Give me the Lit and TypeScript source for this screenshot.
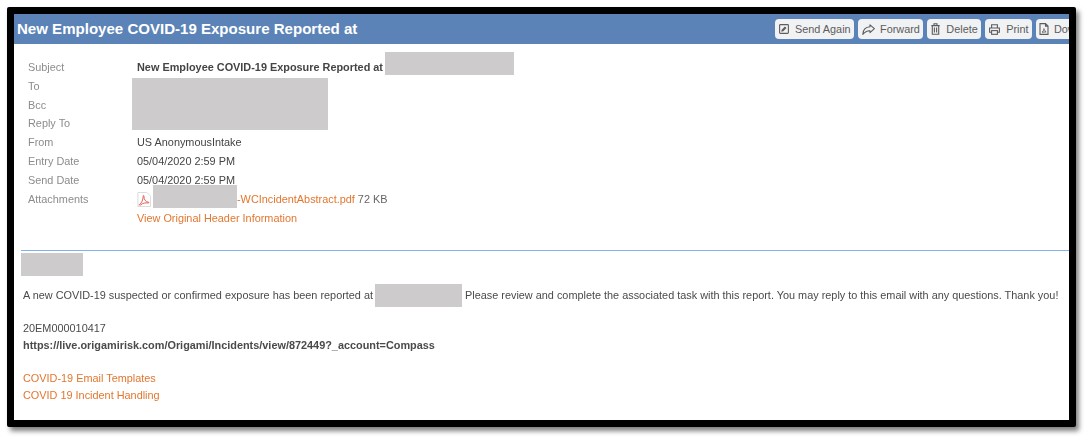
import { LitElement, html, css, svg } from "lit";
import { customElement } from "lit/decorators.js";

const ic = (w: number, h: number, body: unknown) =>
  html`<svg class="ic" style="width:${w}px;height:${h}px" viewBox="0 0 ${w} ${h}" fill="none" stroke="currentColor" stroke-width="1.1">${body}</svg>`;
const edit = ic(10, 10, svg`<rect x=".6" y=".6" width="8.800" height="8.800" rx=".8"/><path d="M2.200 7.800l.5-2.100 3.200-3.200 1.600 1.600-3.200 3.200z" fill="currentColor" stroke="none"/>`);
const fwd = ic(13, 11, svg`<path d="M8 .8l4.400 3.900L8 8.600V6.700C5.200 6.500 3 7.700.8 10.400 1 6 3.800 3.100 8 2.800z" stroke-linejoin="round"/>`);
const del = ic(9, 12, svg`<path d="M.3 2.600h8.400M3 2.400V.8h3v1.600M1.300 2.600v8.700h6.400V2.600M3.400 4.600v4.800M5.600 4.600v4.800"/>`);
const print = ic(11, 11, svg`<path d="M2.600 4V.7h5.800V4M2.600 8.300H.6V4h9.800v4.300h-2"/><rect x="2.600" y="6.600" width="5.800" height="3.700"/>`);
const doc = ic(10, 12, svg`<path d="M1 .6h5.500L9 3.100v8.300H1zM6.500.6v2.500H9"/><path d="M3 9.200c1.200-.8 1.900-2.200 1.900-3.600.5 1.500 1.200 2.700 2.200 3.300z" stroke-width=".9"/>`);

@customElement("app-root")
export class AppRoot extends LitElement {
  static styles = css`
    :host { display: block; width: 1089px; height: 441px; background: #fff; font-family: "Liberation Sans", Arial, sans-serif; font-size: 10.880px; color: #4a4a4a; overflow: hidden; }
    .page { padding: 7px 13px 14px 7px; height: 441px; box-sizing: border-box; filter: blur(0.35px); }
    .frame { height: 420px; box-sizing: border-box; border: 7px solid #000; border-radius: 2px; background: #fff; box-shadow: 3px 4px 5px rgba(0,0,0,.5); overflow: hidden; }
    .head { height: 30px; background: #5b83b7; display: flex; align-items: center; padding-left: 3px; overflow: hidden; }
    .head h1 { margin: 0; flex: none; width: 758px; font-size: 15.050px; line-height: 30px; font-weight: 700; color: #fff; white-space: nowrap; }
    .btns { display: flex; gap: 4.400px; flex: none; }
    .btn { height: 20px; box-sizing: border-box; padding: 0 3px 0 4px; display: flex; align-items: center; gap: 6px; background: #f1f2f4; border-radius: 4px; color: #5c5c5c; white-space: nowrap; }
    .btn.tight { gap: 5px; }
    .btn.dl { padding-left: 3px; gap: 5px; }
    .ic { flex: none; }
    .meta { display: grid; grid-template-columns: 109px 1fr; grid-auto-rows: 18.900px; padding: 13.800px 0 0 14px; line-height: 18.900px; }
    .label { color: #8c8c8c; }
    .val { color: #444; white-space: nowrap; display: flex; align-items: center; }
    .strong { font-weight: 700; }
    .redact { background: #cdcbcc; flex: none; display: inline-block; }
    .r-subject { width: 129px; height: 23px; margin-left: 2px; margin-top: -7px; }
    .r-block { grid-column: 2; grid-row: 2 / span 3; width: 196px; height: 52px; margin: 1.500px 0 0 -5px; }
    .r-file { width: 84px; height: 23px; margin-left: 2px; margin-top: -5px; }
    .link { color: #e2772f; }
    .size { color: #666; margin-left: 3px; }
    .pdf { width: 14px; height: 15px; flex: none; }
    hr { border: 0; border-top: 1px solid #84b2e6; margin: 22.100px 0 0 7px; }
    .body { padding: 2px 0 0 9px; white-space: nowrap; }
    .r-name { display: block; width: 62px; height: 23px; margin-left: -2px; }
    .sentence { display: flex; align-items: center; height: 22px; padding-bottom: 1px; margin-top: 8px; }
    .r-site { width: 87px; height: 23px; margin: 0 3px -1px 2px; }
    .lines { margin-top: 13px; line-height: 17px; }
    .links { margin-top: 16px; line-height: 17px; }
  `;
  render() {
    return html`<div class="page"><div class="frame">
      <div class="head">
        <h1>New Employee COVID-19 Exposure Reported at</h1>
        <div class="btns">
          <div class="btn">${edit}Send Again</div>
          <div class="btn tight">${fwd}Forward</div>
          <div class="btn">${del}Delete</div>
          <div class="btn">${print}Print</div>
          <div class="btn dl">${doc}Download</div>
        </div>
      </div>
      <div class="meta">
        <div class="label">Subject</div><div class="val strong">New Employee COVID-19 Exposure Reported at<span class="redact r-subject"></span></div>
        <div class="label">To</div>
        <div class="redact r-block"></div>
        <div class="label">Bcc</div>
        <div class="label">Reply To</div>
        <div class="label">From</div><div class="val">US AnonymousIntake</div>
        <div class="label">Entry Date</div><div class="val">05/04/2020 2:59 PM</div>
        <div class="label">Send Date</div><div class="val">05/04/2020 2:59 PM</div>
        <div class="label">Attachments</div><div class="val">
          <svg class="pdf" viewBox="0 0 15 16"><path d="M1 .5h9.500l4 4v11H1z" fill="#fff" stroke="#dcd8d8"/><path d="M2.500 13.500C5 12 6.500 8.500 6.600 4.500c.1-1.200 1-1 .9.200-.2 3.300 1.700 5.800 4.800 6.200.9.100.7 1-.3.800-3-.4-6 .3-8 2-.8.700-2 .2-1.500-.2z" fill="none" stroke="#e2554c" stroke-width="1"/></svg>
          <span class="redact r-file"></span><span class="link">-WCIncidentAbstract.pdf</span><span class="size">72 KB</span>
        </div>
        <div></div><div class="val link">View Original Header Information</div>
      </div>
      <hr />
      <div class="body">
        <span class="redact r-name"></span>
        <div class="sentence">A new COVID-19 suspected or confirmed exposure has been reported at<span class="redact r-site"></span>Please review and complete the associated task with this report. You may reply to this email with any questions. Thank you!</div>
        <div class="lines">20EM000010417<br /><span class="strong">https://live.origamirisk.com/Origami/Incidents/view/872449?_account=Compass</span></div>
        <div class="links link">COVID-19 Email Templates<br />COVID 19 Incident Handling</div>
      </div>
    </div></div>`;
  }
}
